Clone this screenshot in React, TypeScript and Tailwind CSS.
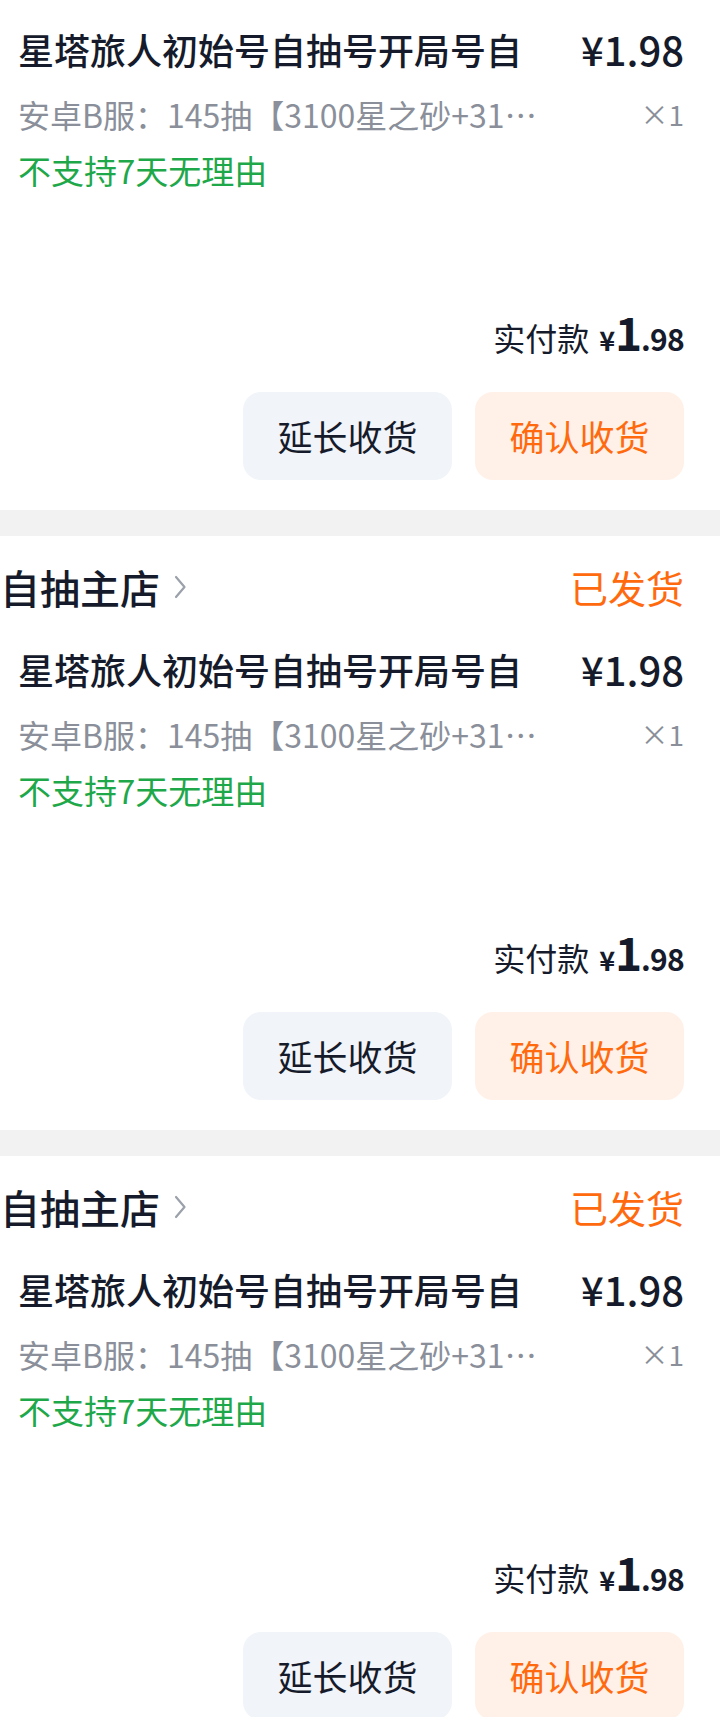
import React from "react";

const FONT = { fontFamily: '"Noto Sans CJK SC", "Noto Sans", sans-serif' };

function Chevron() {
  return (
    <svg width="16" height="26" viewBox="0 0 16 26" fill="none" className="ml-[12px]">
      <path d="M4 3 L12.5 13 L4 23" stroke="#9ba1aa" strokeWidth="2.2" strokeLinecap="round" strokeLinejoin="round" />
    </svg>
  );
}

// first card in the list is scrolled up past its shop header
function OrderCard({ scrolled = false }: { scrolled?: boolean }) {
  return (
    <div className="bg-white">
      <div className={scrolled ? "h-[510px] pt-[25px] pr-[36px]" : "h-[594px] pt-[27px] pr-[36px]"}>
        {!scrolled && (
          <div className="mb-[34px] flex h-[48px] items-center justify-between">
            <div className="flex items-center">
              <span className="text-[40px] leading-[48px] font-medium text-[#161b2b]">自抽主店</span>
              <Chevron />
            </div>
            <span className="text-[38px] leading-[48px] text-[#ff6a0f]">已发货</span>
          </div>
        )}

        {/* goods */}
        <div className="pl-[18px]">
          <div className="flex h-[48px] items-center justify-between">
            <span className="text-[36px] leading-[48px] font-medium text-[#161b2b] whitespace-nowrap">
              星塔旅人初始号自抽号开局号自
            </span>
            <span className="text-[40px] leading-[48px] font-medium text-[#161b2b]">¥1.98</span>
          </div>
          <div className="mt-[21px] flex h-[40px] items-center justify-between text-[32px] leading-[40px] text-[#8a8f9a]">
            <span className="whitespace-nowrap">安卓B服：145抽【3100星之砂+31…</span>
            <span className="text-[28px]">×1</span>
          </div>
          <div className="mt-[16px] h-[40px] text-[33px] leading-[40px] text-[#1ea84a]">不支持7天无理由</div>
        </div>

        {/* total */}
        <div className="mt-[117px] flex h-[48px] items-baseline justify-end text-[#161b2b]">
          <span className="text-[32px] leading-[48px] mr-[10px]">实付款</span>
          <span className="text-[27px] font-bold">¥</span>
          <span className="text-[46px] font-bold leading-[48px] tracking-tight">1</span>
          <span className="text-[30px] font-semibold tracking-tight">.98</span>
        </div>

        {/* actions */}
        <div className="mt-[37px] flex justify-end gap-[23px]">
          <button className="flex h-[88px] w-[209px] items-center justify-center rounded-[18px] bg-[#f1f4f8] text-[35px] text-[#161b2b]">
            延长收货
          </button>
          <button className="flex h-[88px] w-[209px] items-center justify-center rounded-[18px] bg-[#fff1e8] text-[35px] text-[#ff6a0f]">
            确认收货
          </button>
        </div>
      </div>
      <div className="h-[26px] bg-[#f2f2f2]" />
    </div>
  );
}

export default function App() {
  return (
    <div className="h-[1717px] w-[720px] overflow-hidden bg-white" style={FONT}>
      <OrderCard scrolled />
      <OrderCard />
      <OrderCard />
    </div>
  );
}
